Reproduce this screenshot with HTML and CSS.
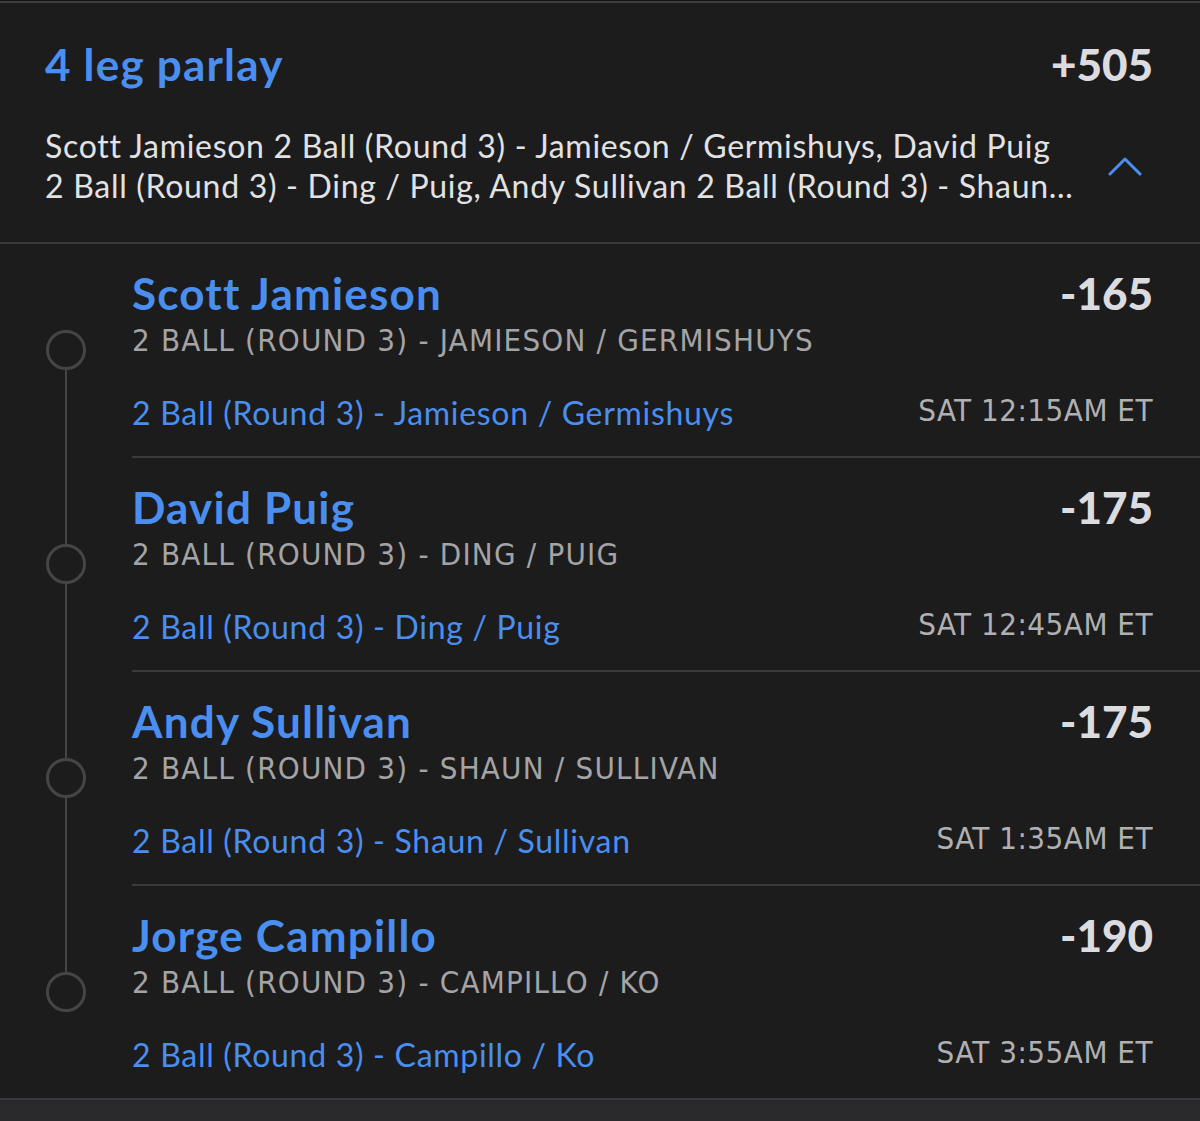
FILE: index.html
```html
<!DOCTYPE html>
<html lang="en">
<head>
<meta charset="utf-8">
<title>4 leg parlay</title>
<link rel="stylesheet" href="styles.css">
</head>
<body>
<div class="card">
  <header class="head">
    <div class="head-row">
      <h1 class="title">4 leg parlay</h1>
      <span class="odds">+505</span>
    </div>
    <div class="desc-row">
      <p class="desc">Scott Jamieson 2 Ball (Round 3) - Jamieson / Germishuys, David Puig 2 Ball (Round 3) - Ding / Puig, Andy Sullivan 2 Ball (Round 3) - Shaun / Sullivan, Jorge Campillo 2 Ball (Round 3) - Campillo / Ko</p>
      <svg class="chev" width="34" height="20" viewBox="0 0 34 20"><polyline points="2,18 17,3 32,18" fill="none" stroke="#4a8ff0" stroke-width="3" stroke-linecap="round" stroke-linejoin="round"/></svg>
    </div>
  </header>
  <div class="legs">
    <div class="leg first">
      <div class="rail"><span class="seg top"></span><span class="dot"></span><span class="seg bottom"></span></div>
      <div class="leg-body">
        <div class="name-row"><span class="name">Scott Jamieson</span><span class="odds">-165</span></div>
        <div class="market">2 BALL (ROUND 3) - JAMIESON / GERMISHUYS</div>
        <div class="foot-row"><span class="event">2 Ball (Round 3) - Jamieson / Germishuys</span><span class="time">SAT 12:15AM ET</span></div>
      </div>
    </div>
    <div class="leg">
      <div class="rail"><span class="seg top"></span><span class="dot"></span><span class="seg bottom"></span></div>
      <div class="leg-body">
        <div class="name-row"><span class="name">David Puig</span><span class="odds">-175</span></div>
        <div class="market">2 BALL (ROUND 3) - DING / PUIG</div>
        <div class="foot-row"><span class="event">2 Ball (Round 3) - Ding / Puig</span><span class="time">SAT 12:45AM ET</span></div>
      </div>
    </div>
    <div class="leg">
      <div class="rail"><span class="seg top"></span><span class="dot"></span><span class="seg bottom"></span></div>
      <div class="leg-body">
        <div class="name-row"><span class="name">Andy Sullivan</span><span class="odds">-175</span></div>
        <div class="market">2 BALL (ROUND 3) - SHAUN / SULLIVAN</div>
        <div class="foot-row"><span class="event">2 Ball (Round 3) - Shaun / Sullivan</span><span class="time">SAT 1:35AM ET</span></div>
      </div>
    </div>
    <div class="leg last">
      <div class="rail"><span class="seg top"></span><span class="dot"></span><span class="seg bottom"></span></div>
      <div class="leg-body">
        <div class="name-row"><span class="name">Jorge Campillo</span><span class="odds">-190</span></div>
        <div class="market">2 BALL (ROUND 3) - CAMPILLO / KO</div>
        <div class="foot-row"><span class="event">2 Ball (Round 3) - Campillo / Ko</span><span class="time">SAT 3:55AM ET</span></div>
      </div>
    </div>
  </div>
  <div class="footer"></div>
</div>
</body>
</html>
```

FILE: styles.css
```css
* { box-sizing: border-box; }
html, body { margin: 0; padding: 0; }
body {
  background: #141415;
  font-family: "Lato", "Open Sans", sans-serif;
  overflow: hidden;
}
.card {
  margin-top: 1px;
  background: #1c1c1d;
  border-top: 2px solid #3d3d3f;
  min-height: 1120px;
  display: flex;
  flex-direction: column;
}
.head {
  padding: 35px 47px 36px 45px;
  border-bottom: 2px solid #3a3a3c;
}
.head-row {
  display: flex;
  justify-content: space-between;
  align-items: baseline;
}
.title {
  margin: 0;
  font-size: 44px;
  line-height: 52px;
  font-weight: 700;
  letter-spacing: 1.2px;
  color: #4a8ff0;
}
.odds {
  font-size: 44px;
  line-height: 52px;
  font-weight: 900;
  letter-spacing: 0;
  color: #dcdce0;
}
.desc-row {
  margin-top: 36px;
  display: flex;
  align-items: center;
  justify-content: space-between;
}
.desc {
  margin: 0;
  width: 1028px;
  font-size: 32px;
  line-height: 40px;
  letter-spacing: 0.7px;
  color: #e2e2e4;
  display: -webkit-box;
  -webkit-line-clamp: 2;
  -webkit-box-orient: vertical;
  overflow: hidden;
}
.chev { margin-right: 11px; flex: none; }
.legs { display: flex; flex-direction: column; }
.leg { display: flex; }
.rail {
  width: 132px;
  flex: none;
  display: flex;
  flex-direction: column;
  align-items: center;
}
.seg { width: 2px; background: #454547; }
.seg.top { height: 86px; }
.seg.bottom { flex: 1; }
.first .seg.top, .last .seg.bottom { background: transparent; }
.dot {
  width: 40px;
  height: 40px;
  border: 3px solid #454547;
  border-radius: 50%;
  flex: none;
}
.leg-body {
  flex: 1;
  padding: 23px 47px 23px 0;
  border-bottom: 2px solid #3a3a3c;
}
.last .leg-body { border-bottom: none; }
.name-row {
  display: flex;
  justify-content: space-between;
  align-items: baseline;
}
.name {
  font-size: 44px;
  line-height: 52px;
  font-weight: 700;
  letter-spacing: 1.2px;
  color: #4a8ff0;
}
.market {
  margin-top: 3px;
  font-family: "Liberation Sans Narrow", "DejaVu Sans Condensed", "Roboto", sans-serif;
  font-size: 31px;
  line-height: 36px;
  letter-spacing: 1.2px;
  color: #a4a4a6;
}
.foot-row {
  margin-top: 34px;
  display: flex;
  justify-content: space-between;
  align-items: flex-end;
}
.event {
  font-size: 32px;
  line-height: 40px;
  letter-spacing: 0.7px;
  color: #4a8ff0;
}
.time {
  font-family: "Liberation Sans Narrow", "DejaVu Sans Condensed", "Roboto", sans-serif;
  font-size: 31px;
  line-height: 36px;
  letter-spacing: 0.5px;
  color: #b0b0b2;
  margin-bottom: 5px;
}
.footer {
  flex: 1;
  background: #2a2a2c;
  border-top: 2px solid #3a3a3c;
}
```
